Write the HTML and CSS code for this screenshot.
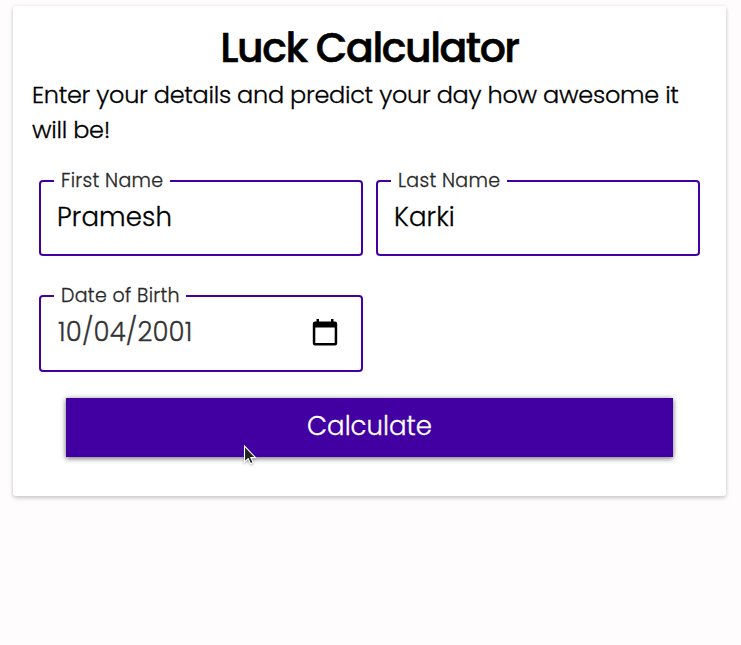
FILE: index.html
```html
<!DOCTYPE html>
<html lang="en">
<head>
<meta charset="utf-8">
<title>Luck Calculator</title>
<link rel="stylesheet" href="styles.css">
</head>
<body>
<main class="card">
  <h1 class="title">Luck Calculator</h1>
  <p class="intro">Enter your details and predict your day how awesome it<br>will be!</p>
  <form class="form">
    <div class="fields">
      <div class="field"><span class="label">First Name</span><span class="value">Pramesh</span></div>
      <div class="field"><span class="label">Last Name</span><span class="value">Karki</span></div>
      <div class="field field-date"><span class="label label-date">Date of Birth</span><span class="value value-date">10/04/2001</span>
        <svg class="calendar" viewBox="0 0 26 28" width="26" height="28"><path fill-rule="evenodd" d="M4.500 0h2.500v2.500h12V0h2.500v2.500h1.500a2.200 2.200 0 0 1 2.200 2.200v19.600a2.200 2.200 0 0 1-2.200 2.200H3a2.200 2.200 0 0 1-2.200-2.200V4.700A2.200 2.200 0 0 1 3 2.500h1.500zM3.300 8.500v15.500h19.400V8.500z"/></svg>
      </div>
    </div>
    <button class="calculate" type="button">Calculate</button>
  </form>
</main>
<svg class="cursor" viewBox="0 0 15 22" width="15" height="22"><path d="M1.500 1v16l3.700-3.400 2.400 5.200 2.600-1.200-2.400-5h4.800z" fill="#222" stroke="#fff" stroke-width="1.100"/></svg>
</body>
</html>
```
FILE: styles.css
```css
* { box-sizing: border-box; }
body {
  margin: 0;
  min-height: 645px;
  padding: 6px 15px 0 13px;
  background: #fffcfd;
  color: #000;
  font-family: Poppins, Inter, sans-serif;
  font-weight: 300;
  -webkit-text-stroke: .3px currentColor;
}
.card {
  height: 490px;
  padding: 12px 19px 0;
  background: #fff;
  border-radius: 3px;
  box-shadow: 0 2px 4px rgba(0, 0, 0, .2), 0 0 4px rgba(0, 0, 0, .06);
}
.title {
  margin: 0;
  height: 59px;
  line-height: 60px;
  font-size: 41px;
  font-weight: 500;
  letter-spacing: -1.450px;
  text-align: center;
  white-space: nowrap;
  -webkit-text-stroke-width: .6px;
}
.intro {
  margin: 0;
  line-height: 35px;
  font-size: 24px;
  letter-spacing: -.290px;
  white-space: nowrap;
}
.form { padding: 33px 7px 0; }
.fields {
  display: grid;
  grid-template-columns: 324px 324px;
  grid-template-rows: 76px 77px;
  gap: 39px 13px;
}
.field {
  position: relative;
  display: flex;
  align-items: center;
  padding: 0 22px 2px 16px;
  border: 2px solid #4200a2;
  border-radius: 4px;
}
.label {
  position: absolute;
  top: -16px;
  left: 13px;
  width: 116px;
  padding-left: 7px;
  background: #fff;
  color: #282828;
  font-size: 19px;
  line-height: 30px;
  letter-spacing: .300px;
  white-space: nowrap;
}
.label-date { width: 132px; }
.value {
  font-size: 26px;
  line-height: 36px;
  letter-spacing: .150px;
}
.field-date { padding: 0 23px 3px 17px; }
.value-date { color: #333; }
.calendar { margin: 2px 0 0 auto; }
.calculate {
  display: block;
  width: 607px;
  height: 59px;
  margin: 26px 0 0 27px;
  padding: 0 0 3px;
  border: 0;
  background: #4200a2;
  color: #fff;
  font: inherit;
  font-size: 26px;
  box-shadow: 0 2px 5px rgba(0, 0, 0, .4), 0 0 5px rgba(0, 0, 0, .25);
}
.cursor {
  position: absolute;
  top: 445px;
  left: 243px;
  filter: drop-shadow(0 1px 1px rgba(0, 0, 0, .3));
}
```
